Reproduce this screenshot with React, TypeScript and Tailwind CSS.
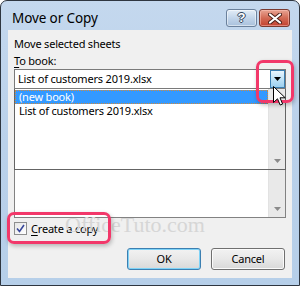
import React from "react";

function DownArrow({ className = "" }: { className?: string }) {
  return (
    <svg width="7" height="4" viewBox="0 0 7 4" className={className}>
      <path d="M0 0H7L3.5 4Z" fill="#8a8a8a" />
    </svg>
  );
}

function ScrollCol({ children }: { children?: React.ReactNode }) {
  return (
    <div className="w-[17px] h-full bg-[#e9e9e9] border-l border-[#e2e2e2] flex flex-col items-center justify-end pb-[6px]">
      {children}
    </div>
  );
}

export default function App() {
  return (
    <div
      className="relative w-[300px] h-[286px] overflow-hidden bg-white"
      style={{ fontFamily: '"Noto Sans", "Open Sans", sans-serif' }}
    >
      <div className="flex flex-col w-full h-full rounded-t-[7px] border border-[#2e3640] bg-gradient-to-b from-[#c4d8ee] via-[#bad1ea] to-[#b6cfe9]">
        {/* Title bar */}
        <div className="h-[29px] flex items-start">
          <span className="ml-[11px] mt-[8px] text-[13.5px] tracking-[-0.1px] leading-[18px] text-[#000]">
            Move or Copy
          </span>
          <div className="ml-auto mr-[9px] mt-[8px] flex gap-[2px]">
            <div className="w-[31px] h-[18px] rounded-[3px] border border-[#6b819c] bg-gradient-to-b from-[#e3edf7] via-[#c2d5ea] to-[#a9c1dc] flex items-center justify-center shadow-[inset_0_0_0_1px_rgba(255,255,255,0.5)]">
              <span
                className="text-[13px] leading-[14px] font-bold text-white"
                style={{
                  fontFamily: '"Liberation Sans", sans-serif',
                  textShadow:
                    "0 0 1px #34485f, 1px 0 0 #34485f, -1px 0 0 #34485f, 0 1px 0 #34485f, 0 -1px 0 #34485f",
                }}
              >
                ?
              </span>
            </div>
            <div className="w-[31px] h-[18px] rounded-[3px] border border-[#7a3a30] bg-gradient-to-b from-[#e8a493] via-[#d26a55] to-[#c2402f] flex items-center justify-center shadow-[inset_0_0_0_1px_rgba(255,200,190,0.5)]">
              <svg width="14" height="11" viewBox="0 0 14 11">
                <path
                  d="M2 1.5L12 9.5M12 1.5L2 9.5"
                  stroke="#4a1f18"
                  strokeWidth="4"
                  strokeLinecap="round"
                />
                <path
                  d="M2 1.5L12 9.5M12 1.5L2 9.5"
                  stroke="#ffffff"
                  strokeWidth="2.2"
                  strokeLinecap="round"
                />
              </svg>
            </div>
          </div>
        </div>

        {/* Client area */}
        <div className="mx-[7px] mb-[7px] flex-1 bg-[#f0f0f0] flex flex-col pl-[6px] pr-[6px] text-[11px] tracking-[-0.2px] text-black">
          <div className="mt-[6px] leading-[16px]">Move selected sheets</div>
          <div className="mt-[1px] leading-[16px]">
            <span className="underline underline-offset-2">T</span>o book:
          </div>

          {/* Combo */}
          <div className="h-[20px] border border-[#7a7a7a] bg-white flex items-stretch">
            <div className="flex-1 pl-[3px] leading-[18px]">List of customers 2019.xlsx</div>
            <div className="w-[15px] border border-[#3c7fb1] bg-gradient-to-b from-[#eaf6fd] via-[#c0e3f7] to-[#9ccfee] flex items-center justify-center">
              <svg width="7" height="4" viewBox="0 0 7 4">
                <path d="M0 0H7L3.5 4Z" fill="#000" />
              </svg>
            </div>
          </div>

          {/* Dropdown popup */}
          <div className="h-[81px] border-x border-b border-[#646464] bg-white flex">
            <div className="flex-1 flex flex-col pt-[1px]">
              <div className="h-[14px] bg-[#3399ff] text-white leading-[12px] pl-[3px] border border-dotted border-[#d38a3a]">
                (new book)
              </div>
              <div className="h-[14px] leading-[14px] pl-[4px]">List of customers 2019.xlsx</div>
            </div>
            <ScrollCol>
              <DownArrow />
            </ScrollCol>
          </div>

          {/* Listbox below */}
          <div className="h-[48px] border-x border-b border-[#828282] bg-white flex">
            <div className="flex-1" />
            <ScrollCol>
              <DownArrow />
            </ScrollCol>
          </div>

          {/* Checkbox */}
          <div className="mt-[4px] flex items-center h-[13px]">
            <div className="w-[13px] h-[13px] border border-[#8e8f8f] bg-gradient-to-br from-[#e6e6e6] to-[#ffffff] flex items-center justify-center">
              <svg width="9" height="9" viewBox="0 0 9 9">
                <path d="M1 4.5L3.5 7.5L8 1" stroke="#38479a" strokeWidth="1.6" fill="none" />
              </svg>
            </div>
            <span className="ml-[4px] leading-[16px]">
              <span className="underline underline-offset-2">C</span>reate a copy
            </span>
          </div>

          {/* Buttons */}
          <div className="mt-[13px] flex justify-end gap-[10px] pr-[1px]">
            <div className="w-[74px] h-[22px] rounded-[3px] border border-[#3c7fb1] bg-gradient-to-b from-[#f2f2f2] via-[#e8e8e8] to-[#d9d9d9] shadow-[inset_0_0_0_1px_#7fd3f7] flex items-center justify-center leading-[16px]">
              OK
            </div>
            <div className="w-[74px] h-[22px] rounded-[3px] border border-[#707070] bg-gradient-to-b from-[#f2f2f2] via-[#e8e8e8] to-[#d9d9d9] shadow-[inset_0_0_0_1px_#fbfbfb] flex items-center justify-center leading-[16px]">
              Cancel
            </div>
          </div>
        </div>
      </div>

      {/* Watermark */}
      <div
        className="absolute left-[65px] top-[212px] text-[22px] leading-[26px] text-[#d6d6d6] pointer-events-none"
        style={{ fontFamily: '"Liberation Serif", serif' }}
      >
        OfficeTuto.com
      </div>

      {/* Red highlight boxes */}
      <div className="absolute left-[256px] top-[60px] w-[38px] h-[43px] rounded-[7px] border-[3px] border-[#f2386a] shadow-[1px_2px_4px_rgba(0,0,0,0.25)]" />
      <div className="absolute left-[7px] top-[212px] w-[104px] h-[32px] rounded-[7px] border-[3px] border-[#f2386a] shadow-[1px_2px_4px_rgba(0,0,0,0.25)]" />

      {/* Mouse cursor */}
      <svg className="absolute left-[273px] top-[86px]" width="13" height="20" viewBox="0 0 13 20">
        <path
          d="M0.5 0.5V16.5L4.5 12.8L7.2 19L9.6 18L7 11.8H12.2Z"
          fill="#fff"
          stroke="#000"
          strokeWidth="1"
          strokeLinejoin="round"
        />
      </svg>
    </div>
  );
}
